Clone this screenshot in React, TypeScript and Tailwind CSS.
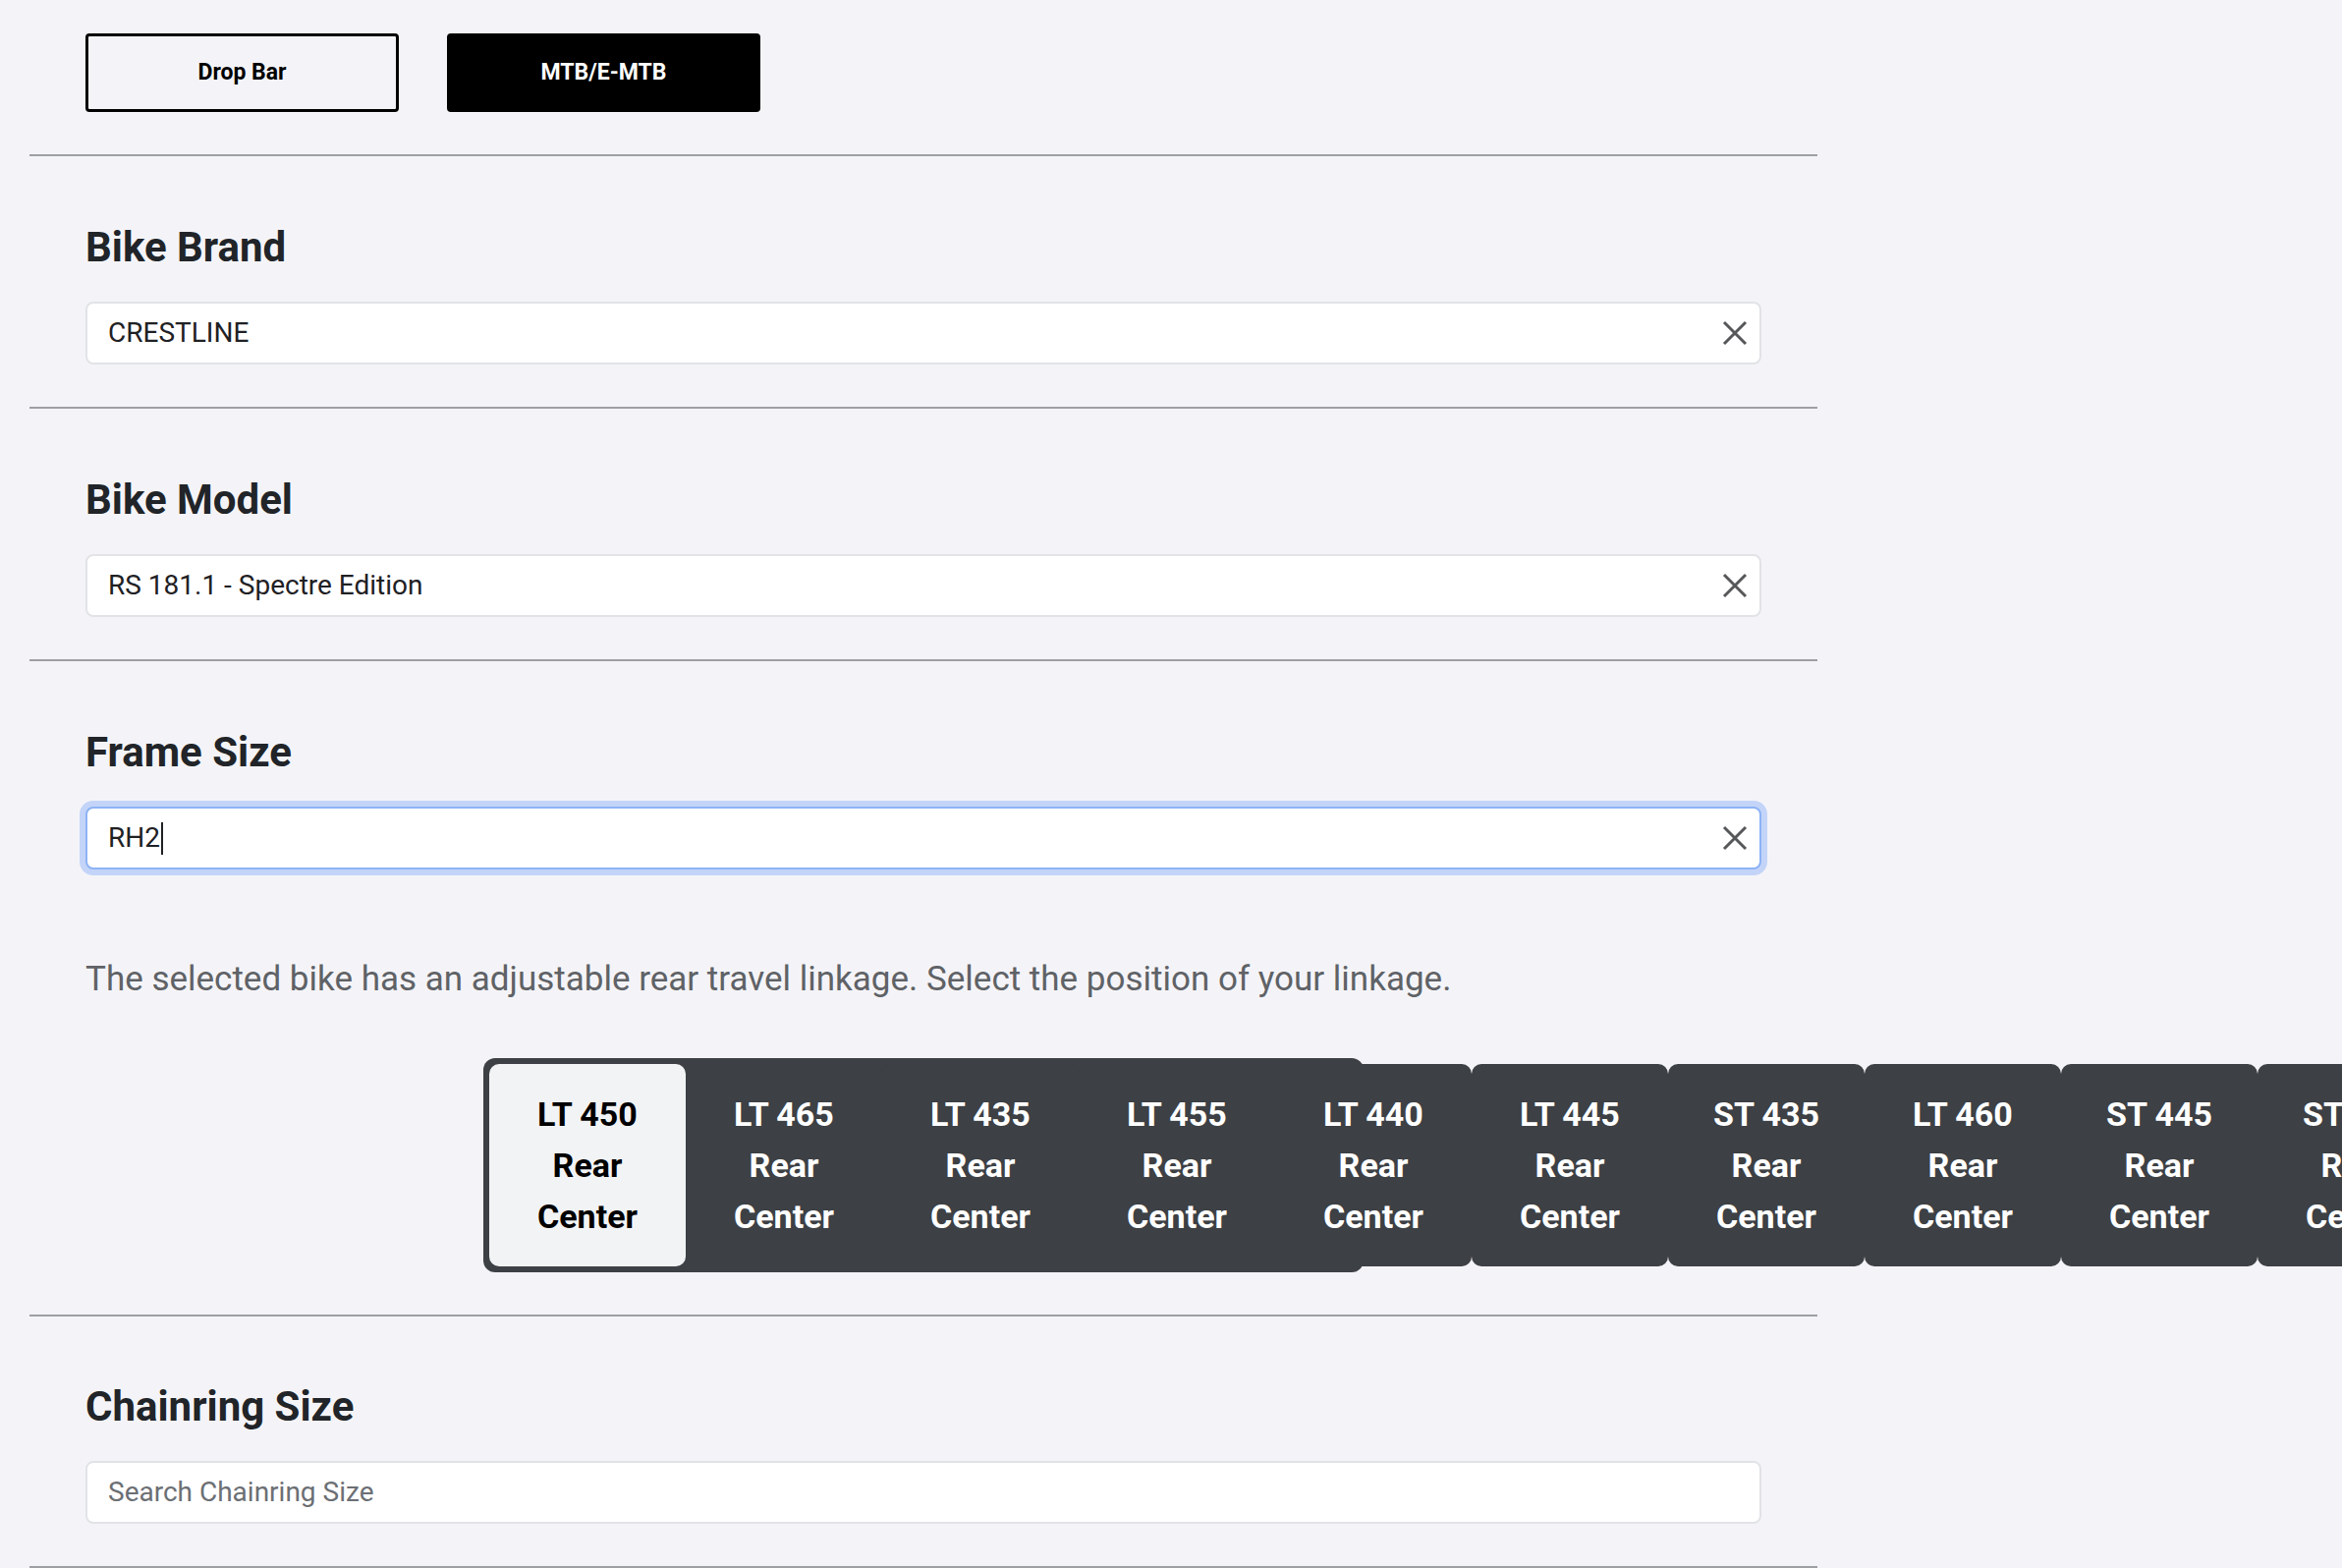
import React from 'react';

const ClearIcon = () => (
  <svg width="26" height="26" viewBox="0 0 26 26" className="shrink-0">
    <path d="M2 2L24 24M24 2L2 24" stroke="#555759" strokeWidth="3" fill="none" />
  </svg>
);

const Divider = () => <div className="h-[2px] w-full bg-[#9d9fa3]" />;

type FieldProps = {
  value?: string;
  placeholder?: string;
  focused?: boolean;
  clearable?: boolean;
};

const Field = ({ value, placeholder, focused, clearable = true }: FieldProps) => (
  <div
    className={
      focused
        ? 'mt-[30px] flex h-[64px] items-center rounded-[8px] border-2 border-[#8db3f5] bg-white pl-[21px] pr-[12px] shadow-[0_0_0_6px_#c3d4f8]'
        : 'mt-[30px] flex h-[64px] items-center rounded-[8px] border-2 border-[#e1e3e7] bg-white pl-[21px] pr-[12px]'
    }
  >
    <div className="flex flex-1 items-center text-[28px] leading-none">
      {value ? (
        <span className="text-[#1f2124]">{value}</span>
      ) : (
        <span className="text-[#6c6f74]">{placeholder}</span>
      )}
      {focused && <span className="ml-[1px] h-[33px] w-[2px] bg-[#1f2124]" />}
    </div>
    {clearable && <ClearIcon />}
  </div>
);

const Heading = ({ children }: { children: React.ReactNode }) => (
  <h2 className="text-[42px] font-bold leading-[50px] text-[#212428]">{children}</h2>
);

const linkages = [
  'LT 450',
  'LT 465',
  'LT 435',
  'LT 455',
  'LT 440',
  'LT 445',
  'ST 435',
  'LT 460',
  'ST 445',
  'ST 455',
];

const App = () => {
  return (
    <div className="min-h-screen overflow-hidden bg-[#f4f4f8] font-['Roboto',sans-serif]">
      <div className="ml-[30px] w-[1820px]">
        {/* Bike type toggle */}
        <div className="flex gap-[49px] px-[57px] pb-[43px] pt-[34px]">
          <button className="h-[80px] w-[319px] rounded-[4px] border-[3px] border-black text-[23px] font-bold text-black">
            Drop Bar
          </button>
          <button className="h-[80px] w-[319px] rounded-[4px] bg-black text-[23px] font-bold text-white">
            MTB/E-MTB
          </button>
        </div>
        <Divider />

        <section className="px-[57px] pb-[43px] pt-[68px]">
          <Heading>Bike Brand</Heading>
          <Field value="CRESTLINE" />
        </section>
        <Divider />

        <section className="px-[57px] pb-[43px] pt-[68px]">
          <Heading>Bike Model</Heading>
          <Field value="RS 181.1 - Spectre Edition" />
        </section>
        <Divider />

        <section className="px-[57px] pb-[43px] pt-[68px]">
          <Heading>Frame Size</Heading>
          <Field value="RH2" focused />
          <p className="mt-[86px] text-[35px] leading-[51px] text-[#5f6266]">
            The selected bike has an adjustable rear travel linkage. Select the position of your linkage.
          </p>
          <div className="mt-[55px] flex justify-center">
            <div className="flex h-[218px] w-[896px] rounded-[12px] bg-[#3d4044] p-[6px]">
              {linkages.map((name, i) => (
                <div
                  key={name}
                  className={
                    i === 0
                      ? 'flex w-[200px] shrink-0 flex-col items-center rounded-[10px] bg-[#f2f3f5] py-[25px] text-[34px] font-bold leading-[52px] text-black'
                      : 'flex w-[200px] shrink-0 flex-col items-center rounded-[10px] bg-[#3d4044] py-[25px] text-[34px] font-bold leading-[52px] text-white'
                  }
                >
                  <span className="whitespace-nowrap">{name}</span>
                  <span>Rear</span>
                  <span>Center</span>
                </div>
              ))}
            </div>
          </div>
        </section>
        <Divider />

        <section className="px-[57px] pb-[43px] pt-[67px]">
          <Heading>Chainring Size</Heading>
          <Field placeholder="Search Chainring Size" clearable={false} />
        </section>
        <Divider />
      </div>
    </div>
  );
};

export default App;
